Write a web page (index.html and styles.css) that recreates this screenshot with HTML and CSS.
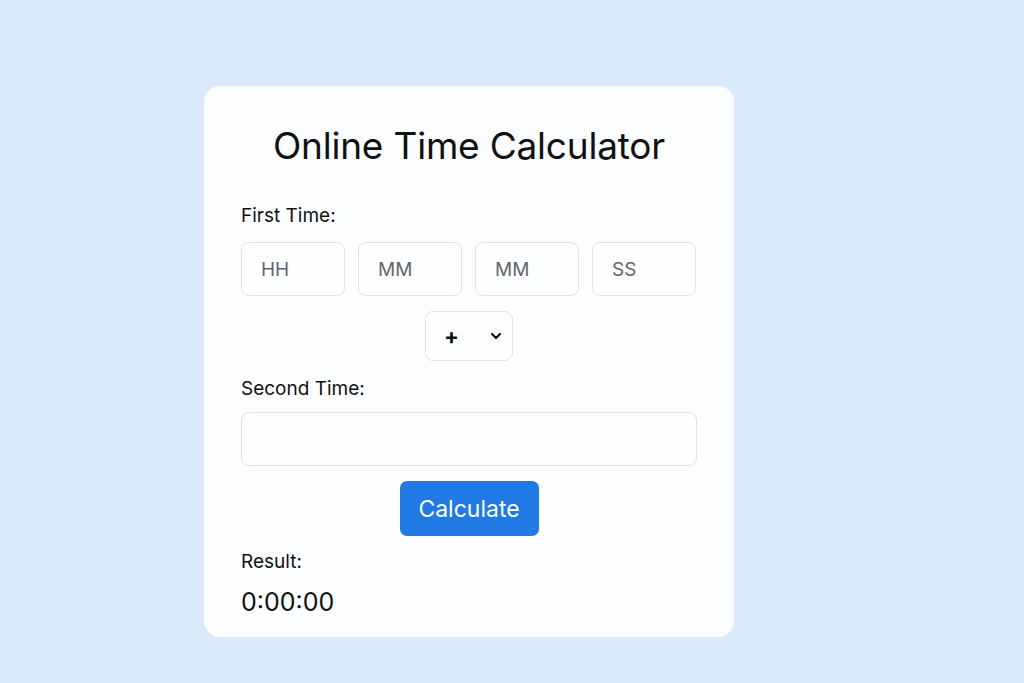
FILE: index.html
```html
<!DOCTYPE html>
<html lang="en">
<head>
  <meta charset="UTF-8">
  <meta name="viewport" content="width=device-width, initial-scale=1.0">
  <title>Online Time Calculator</title>
  <link rel="stylesheet" href="styles.css">
</head>
<body>
  <div class="card">
    <h1>Online Time Calculator</h1>

    <label class="label">First Time:</label>
    <div class="time-row">
      <input class="field" type="text" placeholder="HH">
      <input class="field" type="text" placeholder="MM">
      <input class="field" type="text" placeholder="MM">
      <input class="field" type="text" placeholder="SS">
    </div>

    <div class="op-row">
      <div class="op-select">
        <span class="op">+</span>
        <svg width="12" height="8" viewBox="0 0 12 8"><path d="M2 2l4 4 4-4" fill="none" stroke="#111" stroke-width="2.2" stroke-linecap="round" stroke-linejoin="round"/></svg>
      </div>
    </div>

    <label class="label second">Second Time:</label>
    <input class="field wide" type="text">

    <div class="btn-row">
      <button class="calc-btn">Calculate</button>
    </div>

    <div class="label result-label">Result:</div>
    <div class="result">0:00:00</div>
  </div>
</body>
</html>
```

FILE: styles.css
```css
body {
  margin: 0;
  padding: 86px 0 0;
  background-color: #dbeafb;
  font-family: Inter, "Noto Sans", Arial, sans-serif;
  color: #111;
}
.card {
  width: 456px;
  margin: 0 0 0 204px;
  background-color: #fbfdff;
  border-radius: 16px;
  padding: 38px 37px 19px;
}
h1 {
  margin: 0 0 37px;
  text-align: center;
  font-size: 37px;
  font-weight: 400;
  line-height: 44px;
  letter-spacing: -0.2px;
}
.label {
  display: block;
  font-size: 19px;
  line-height: 22px;
  margin-bottom: 15px;
}
.label.second {
  margin-bottom: 12px;
}
.label.result-label {
  margin-bottom: 13px;
}
.time-row {
  display: flex;
  gap: 13px;
}
.field {
  box-sizing: border-box;
  width: 104px;
  height: 54px;
  border: 1.5px solid #dfe3e8;
  border-radius: 8px;
  background: #fdfeff;
  padding: 0 19px;
  font-family: inherit;
  font-size: 19px;
  color: #333;
  outline: none;
}
.field::placeholder {
  color: #62666c;
}
.field.wide {
  width: 100%;
  display: block;
}
.op-row {
  display: flex;
  justify-content: center;
  margin: 15px 0 17px;
}
.op-select {
  box-sizing: border-box;
  width: 88px;
  height: 50px;
  border: 1.5px solid #dfe3e8;
  border-radius: 8px;
  display: flex;
  align-items: center;
  justify-content: space-between;
  padding: 0 10px 0 18px;
}
.op {
  font-size: 22px;
  font-weight: 700;
}
.btn-row {
  display: flex;
  justify-content: center;
  margin: 15px 0 15px;
}
.calc-btn {
  width: 139px;
  height: 55px;
  border: none;
  border-radius: 7px;
  background-color: #2179e3;
  color: #fff;
  font-family: inherit;
  font-size: 23px;
  cursor: pointer;
}
.result {
  font-size: 25px;
  line-height: 32px;
}
```
